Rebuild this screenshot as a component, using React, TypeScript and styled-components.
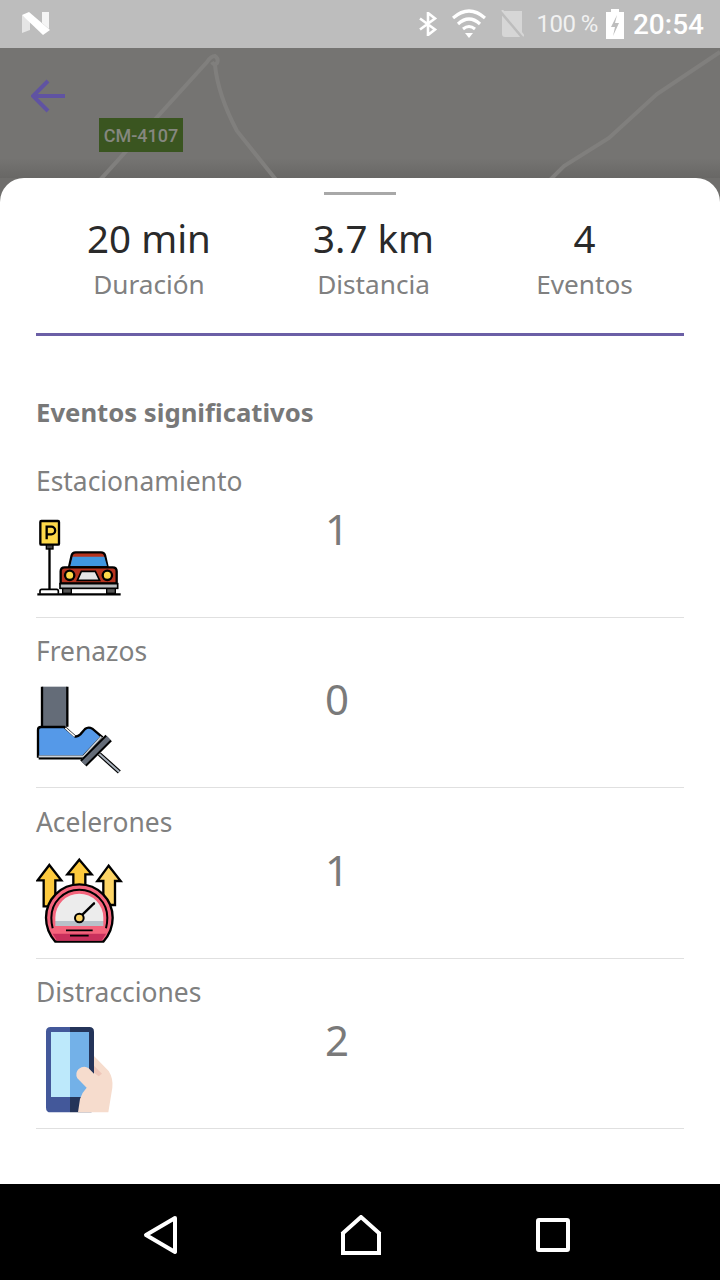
import React from 'react';
import styled, { createGlobalStyle } from 'styled-components';

const GlobalStyle = createGlobalStyle`
  html, body {
    margin: 0;
    padding: 0;
    background: #000000;
  }
  #root {
    height: 1280px;
  }
`;

const Screen = styled.div`
  width: 720px;
  height: 1280px;
  display: flex;
  flex-direction: column;
  overflow: hidden;
  background: #6f6e6c;
  font-family: "Noto Sans", sans-serif;
`;

const StatusBar = styled.div`
  height: 48px;
  flex: none;
  display: flex;
  align-items: center;
  padding: 0 16px 0 22px;
  background: #bdbdbd;
  color: #ffffff;
  font-family: Roboto, sans-serif;
`;

const StatusRight = styled.div`
  margin-left: auto;
  display: flex;
  align-items: center;
`;

const WifiIcon = styled.svg`
  margin-left: 13px;
`;

const SimIcon = styled.svg`
  margin-left: 14px;
`;

const BatteryText = styled.span`
  font-size: 24px;
  margin: 0 8px 0 12px;
  color: #f1f1f1;
  letter-spacing: -0.5px;
`;

const Clock = styled.span`
  font-size: 28px;
  font-weight: 500;
  margin-left: 9px;
`;

const MapArea = styled.div`
  position: relative;
  height: 130px;
  flex: none;
  background: linear-gradient(#757472 85%, #686765);
`;

const RoadLayer = styled.svg`
  position: absolute;
  inset: 0;
`;

const BackButton = styled.svg`
  position: absolute;
  left: 31px;
  top: 30px;
`;

const RoadBadge = styled.div`
  position: absolute;
  left: 99px;
  top: 70px;
  width: 84px;
  height: 34px;
  display: flex;
  align-items: center;
  justify-content: center;
  background: #3a5520;
  color: #85877f;
  font-family: Roboto, sans-serif;
  font-size: 18px;
  font-weight: 500;
`;

const Sheet = styled.div`
  flex: 1;
  display: flex;
  flex-direction: column;
  padding: 14px 36px 0;
  background: #ffffff;
  border-radius: 24px 24px 0 0;
`;

const Handle = styled.div`
  width: 72px;
  height: 3px;
  flex: none;
  align-self: center;
  background: #a8a8a8;
`;

const Stats = styled.div`
  display: flex;
  justify-content: space-around;
  height: 141px;
  flex: none;
  box-sizing: border-box;
  padding-top: 20px;
  border-bottom: 3px solid #6b5fa6;
`;

const Stat = styled.div`
  display: flex;
  flex-direction: column;
  align-items: center;
`;

const StatValue = styled.div`
  font-size: 38.5px;
  line-height: 46px;
  color: #2a2a2a;
`;

const StatLabel = styled.div`
  font-size: 26.2px;
  line-height: 46px;
  color: #808080;
`;

const SectionTitle = styled.h2`
  margin: 58px 0 15px;
  font-size: 25.7px;
  line-height: 38px;
  font-weight: 700;
  color: #787878;
`;

const Row = styled.div`
  height: 170.5px;
  flex: none;
  box-sizing: border-box;
  border-bottom: 1px solid #e0e0e0;
`;

const RowLabel = styled.div`
  height: 62.5px;
  display: flex;
  align-items: flex-end;
  padding-bottom: 12px;
  box-sizing: border-box;
  font-size: 26.4px;
  line-height: 34px;
  color: #808080;
`;

const RowBody = styled.div`
  display: flex;
`;

const IconBox = styled.svg`
  width: 90px;
  height: 100px;
  flex: none;
  margin-right: 198px;
`;

const RowValue = styled.div`
  width: 26px;
  margin-top: -1px;
  text-align: center;
  font-size: 42px;
  line-height: 40px;
  color: #7a7a7a;
`;

const NavBar = styled.div`
  height: 96px;
  flex: none;
  box-sizing: border-box;
  display: flex;
  align-items: center;
  padding: 5px 0 0 142px;
  background: #000000;
`;

const HomeIcon = styled.svg`
  margin: 0 154px 0 162px;
`;

const ParkingIcon = () => (
  <IconBox viewBox="48 0 270 300">
    <rect x="61" y="33" width="56" height="71" rx="3" fill="#fdd94a" stroke="#000" strokeWidth="7" />
    <path d="M80 88V50h14a11 11 0 0 1 0 23H80" fill="none" stroke="#000" strokeWidth="7" />
    <rect x="79" y="105" width="20" height="12" fill="#444" stroke="#000" strokeWidth="4" />
    <rect x="85" y="115" width="7" height="125" fill="#000" />
    <path d="M60 251v-8q0-5 5-5h45q5 0 5 5v8" fill="#fff" stroke="#000" strokeWidth="5" />
    <path d="M52 253H302" stroke="#000" strokeWidth="7" />
    <rect x="128" y="234" width="26" height="16" fill="#555" stroke="#000" strokeWidth="4" />
    <rect x="260" y="234" width="26" height="16" fill="#555" stroke="#000" strokeWidth="4" />
    <path d="M147 172l8-36q2-9 12-9h76q10 0 12 9l8 36z" fill="#b7341f" stroke="#000" strokeWidth="7" />
    <path d="M151 168l7-28h95l8 28z" fill="#3f97e0" />
    <path d="M122 220v-36q0-12 12-12h144q12 0 12 12v36z" fill="#b7341f" stroke="#000" strokeWidth="7" />
    <circle cx="149" cy="196" r="14" fill="#fdd94a" stroke="#000" strokeWidth="7" />
    <circle cx="262" cy="196" r="14" fill="#fdd94a" stroke="#000" strokeWidth="7" />
    <path d="M172 211l12-27h42l13 27z" fill="#e4e4e4" stroke="#000" strokeWidth="5" />
    <rect x="120" y="221" width="173" height="14" fill="#b9bdbf" stroke="#000" strokeWidth="5" />
  </IconBox>
);

const FootIcon = () => (
  <IconBox viewBox="48 0 270 300">
    <path d="M238 222L298 276" stroke="#000" strokeWidth="13" />
    <path d="M238 222L298 276" stroke="#a9b2bd" strokeWidth="6" />
    <rect x="66" y="20" width="76" height="120" fill="#646c78" />
    <path d="M66 20V140M142 20V140" stroke="#000" strokeWidth="7" />
    <path d="M54 230V150q0-9 9-9h70l32 28q8 2 16-6l14-16q10-8 22-1l28 24-56 60z" fill="#5599e8" stroke="#000" strokeWidth="7" />
    <path d="M136 144l28 25" stroke="#fff" strokeWidth="5" />
    <path d="M56 236H186" stroke="#000" strokeWidth="5" />
    <path d="M56 229H190L244 170" fill="none" stroke="#ccd2d8" strokeWidth="5" />
    <path d="M190 250L266 174" stroke="#000" strokeWidth="27" />
    <path d="M190 250L266 174" stroke="#646c78" strokeWidth="15" />
  </IconBox>
);

const GaugeIcon = () => (
  <IconBox viewBox="48 0 270 300">
    <path d="M88 42l36 46H106v78H71V88H53z" fill="#fdca3e" stroke="#000" strokeWidth="7" />
    <path d="M178 26l37 44H196v40H160V70H142z" fill="#fdca3e" stroke="#000" strokeWidth="7" />
    <path d="M266 44l36 46H285v72H250V90H232z" fill="#fdd566" stroke="#000" strokeWidth="7" />
    <path d="M106 272q-28-32-28-72a100 100 0 0 1 200 0q0 40-28 72z" fill="#f4647c" stroke="#000" strokeWidth="7" />
    <path d="M111 269l-13-21h160l-13 21z" fill="#c9305c" />
    <path d="M98 232q-4-16-4-32a84 84 0 0 1 168 0q0 16-4 32" fill="none" stroke="#000" strokeWidth="6" />
    <path d="M106 210v-10a72 72 0 0 1 144 0v10z" fill="#ececec" />
    <rect x="106" y="210" width="144" height="15" fill="#b8c1c9" />
    <path d="M178 200L222 157" stroke="#000" strokeWidth="7" strokeLinecap="round" />
    <circle cx="178" cy="201" r="13" fill="#fdd566" stroke="#000" strokeWidth="6" />
    <path d="M138 238h80M150 254h56" stroke="#000" strokeWidth="5" />
  </IconBox>
);

const PhoneIcon = () => (
  <IconBox viewBox="48 0 270 300">
    <path d="M150 18H92q-14 0-14 14v228q0 14 14 14h58z" fill="#43589a" />
    <path d="M150 18h58q14 0 14 14v228q0 14-14 14h-58z" fill="#243459" />
    <rect x="93" y="33" width="57" height="195" fill="#bde9fb" />
    <rect x="150" y="33" width="57" height="195" fill="#73b1e8" />
    <path d="M222 105l44 45q14 22 11 50l-12 74H174l6-40q6-20 20-34l-28-28q-8-16 4-28 16-12 30-2l16 16z" fill="#f6dccd" />
    <path d="M222 134l24 24-10 8-14-11z" fill="#eec6b8" />
  </IconBox>
);

const events = [
  { label: 'Estacionamiento', value: 1, Icon: ParkingIcon },
  { label: 'Frenazos', value: 0, Icon: FootIcon },
  { label: 'Acelerones', value: 1, Icon: GaugeIcon },
  { label: 'Distracciones', value: 2, Icon: PhoneIcon },
];

const stats = [
  { value: '20 min', label: 'Duración' },
  { value: '3.7 km', label: 'Distancia' },
  { value: '4', label: 'Eventos' },
];

export default function App() {
  return (
    <Screen>
      <GlobalStyle />
      <StatusBar>
        <svg width="28" height="24" viewBox="0 0 28 24">
          <path d="M0 3v18l8-3V9z" fill="#fff" fillOpacity="0.6" />
          <path d="M0 3l7-3 21 18-7 5z" fill="#fff" />
          <path d="M20 0h7v17l-7-6z" fill="#fff" fillOpacity="0.85" />
        </svg>
        <StatusRight>
          <svg width="22" height="24" viewBox="0 0 22 24">
            <path d="M3 6.5l15 11-7 5.5V1l7 5.5-15 11" fill="none" stroke="#fff" strokeWidth="2.6" />
          </svg>
          <WifiIcon width="34" height="30" viewBox="0 0 34 30">
            <path d="M1 9q16-14 32 0" fill="none" stroke="#fff" strokeWidth="3.2" />
            <path d="M6 15q11-10 22 0" fill="none" stroke="#fff" strokeWidth="3.2" />
            <path d="M11 20q6-5 12 0" fill="none" stroke="#fff" strokeWidth="3" />
            <path d="M13 24h8l-4 5z" fill="#fff" />
          </WifiIcon>
          <SimIcon width="24" height="28" viewBox="0 0 24 28">
            <path d="M2 4q0-3 3-3h12l5 0v23q0 3-3 3H5q-3 0-3-3z" fill="#d6d6d6" />
            <path d="M1 2l22 26" stroke="#bdbdbd" strokeWidth="3" />
            <path d="M2 0l22 26" stroke="#d6d6d6" strokeWidth="2" />
          </SimIcon>
          <BatteryText>100 %</BatteryText>
          <svg width="18" height="30" viewBox="0 0 18 30">
            <path d="M5 0h8v3h5v27H0V3h5z" fill="#fff" />
            <path d="M11 6l-6 12h4l-2 9 6-13H9z" fill="#bdbdbd" />
          </svg>
          <Clock>20:54</Clock>
        </StatusRight>
      </StatusBar>
      <MapArea>
        <RoadLayer width="720" height="130" viewBox="0 48 720 130">
          <g fill="none" stroke="#807f7d" strokeWidth="4">
            <path d="M100 180L207 62q4-6 8-6 4 3 2 7-3 3-5-1" />
            <path d="M215 65q3 30 22 66l40 50" />
            <path d="M550 180l14-14 45-28 48-44 63-42" />
          </g>
        </RoadLayer>
        <BackButton width="36" height="36" viewBox="0 0 36 36">
          <path d="M34 18H3M17 3L2 18l15 15" fill="none" stroke="#6053a2" strokeWidth="4" />
        </BackButton>
        <RoadBadge>CM-4107</RoadBadge>
      </MapArea>
      <Sheet>
        <Handle />
        <Stats>
          {stats.map(s => (
            <Stat key={s.label}>
              <StatValue>{s.value}</StatValue>
              <StatLabel>{s.label}</StatLabel>
            </Stat>
          ))}
        </Stats>
        <SectionTitle>Eventos significativos</SectionTitle>
        {events.map(({ label, value, Icon }) => (
          <Row key={label}>
            <RowLabel>{label}</RowLabel>
            <RowBody>
              <Icon />
              <RowValue>{value}</RowValue>
            </RowBody>
          </Row>
        ))}
      </Sheet>
      <NavBar>
        <svg width="36" height="40" viewBox="0 0 36 40">
          <path d="M33 3L4 20l29 17z" fill="none" stroke="#fff" strokeWidth="4" strokeLinejoin="round" />
        </svg>
        <HomeIcon width="42" height="40" viewBox="0 0 42 40">
          <path d="M2 19L21 2l19 17M3 18v20h36V18" fill="none" stroke="#fff" strokeWidth="4" />
        </HomeIcon>
        <svg width="34" height="34" viewBox="0 0 34 34">
          <rect x="2" y="2" width="30" height="30" rx="1" fill="none" stroke="#fff" strokeWidth="4" />
        </svg>
      </NavBar>
    </Screen>
  );
}
